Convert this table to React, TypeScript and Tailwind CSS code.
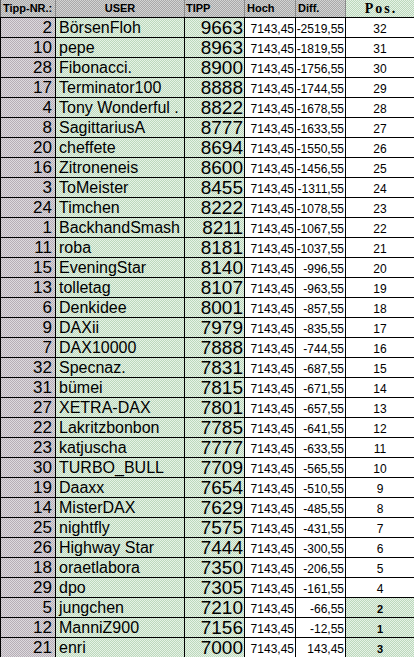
import React from "react";

type Row = [number, string, number, string, number];

const rows: Row[] = [
  [2, "BörsenFloh", 9663, "-2519,55", 32],
  [10, "pepe", 8963, "-1819,55", 31],
  [28, "Fibonacci.", 8900, "-1756,55", 30],
  [17, "Terminator100", 8888, "-1744,55", 29],
  [4, "Tony Wonderful .", 8822, "-1678,55", 28],
  [8, "SagittariusA", 8777, "-1633,55", 27],
  [20, "cheffete", 8694, "-1550,55", 26],
  [16, "Zitroneneis", 8600, "-1456,55", 25],
  [3, "ToMeister", 8455, "-1311,55", 24],
  [24, "Timchen", 8222, "-1078,55", 23],
  [1, "BackhandSmash", 8211, "-1067,55", 22],
  [11, "roba", 8181, "-1037,55", 21],
  [15, "EveningStar", 8140, "-996,55", 20],
  [13, "tolletag", 8107, "-963,55", 19],
  [6, "Denkidee", 8001, "-857,55", 18],
  [9, "DAXii", 7979, "-835,55", 17],
  [7, "DAX10000", 7888, "-744,55", 16],
  [32, "Specnaz.", 7831, "-687,55", 15],
  [31, "bümei", 7815, "-671,55", 14],
  [27, "XETRA-DAX", 7801, "-657,55", 13],
  [22, "Lakritzbonbon", 7785, "-641,55", 12],
  [23, "katjuscha", 7777, "-633,55", 11],
  [30, "TURBO_BULL", 7709, "-565,55", 10],
  [19, "Daaxx", 7654, "-510,55", 9],
  [14, "MisterDAX", 7629, "-485,55", 8],
  [25, "nightfly", 7575, "-431,55", 7],
  [26, "Highway Star", 7444, "-300,55", 6],
  [18, "oraetlabora", 7350, "-206,55", 5],
  [29, "dpo", 7305, "-161,55", 4],
  [5, "jungchen", 7210, "-66,55", 2],
  [12, "ManniZ900", 7156, "-12,55", 1],
  [21, "enri", 7000, "143,45", 3],
];

const greyBg =
  "bg-[repeating-conic-gradient(#a9a9a9_0_25%,#d3d3d3_0_50%)] bg-[length:2px_2px]";
const lavBg =
  "bg-[repeating-conic-gradient(#b6aeb6_0_25%,#ddd9dd_0_50%)] bg-[length:2px_2px]";
const greenBg =
  "bg-[repeating-conic-gradient(#bcd8bc_0_25%,#e6f2e6_0_50%)] bg-[length:2px_2px]";

export default function App() {
  return (
    <div className="w-[414px] h-[657px] overflow-hidden bg-white font-['Liberation_Sans',Arial,sans-serif] text-black">
      {/* header */}
      <div className={`flex h-[18px] border-b border-black ${greyBg}`}>
        <div className="w-[56px] border-l border-[#555] border-r border-r-[#8a8a8a] text-[11px] font-bold leading-[17px] pl-[2px]">
          Tipp-NR.:
        </div>
        <div className="w-[129px] border-r border-[#8a8a8a] text-[11px] font-bold leading-[17px] text-center">
          USER
        </div>
        <div className="w-[60px] border-r border-[#8a8a8a] text-[11px] font-bold leading-[17px] pl-[1px]">
          TIPP
        </div>
        <div className="w-[51px] border-r border-[#8a8a8a] text-[11px] font-bold leading-[17px] pl-[2px]">
          Hoch
        </div>
        <div className="w-[50px] border-r border-[#8a8a8a] text-[11px] font-bold leading-[17px] pl-[2px]">
          Diff.
        </div>
        <div
          className={`w-[68px] text-[14px] font-bold leading-[17px] text-center tracking-[2px] pl-[2px] font-['Liberation_Serif',serif] ${greenBg}`}
        >
          Pos.
        </div>
      </div>
      {rows.map(([nr, user, tipp, diff, pos], i) => {
        const top = pos <= 3;
        return (
          <div key={i} className="flex h-[20px] border-b border-black">
            <div
              className={`w-[56px] border-l border-[#555] border-r border-black text-right text-[17px] leading-[19px] pr-[3px] ${lavBg}`}
            >
              {nr}
            </div>
            <div
              className={`w-[129px] border-r border-black text-[16px] leading-[19px] pl-[3px] whitespace-nowrap overflow-hidden ${greenBg}`}
            >
              {user}
            </div>
            <div
              className={`w-[60px] border-r border-black text-right text-[19px] leading-[19px] pr-[1px] ${greenBg}`}
            >
              {tipp}
            </div>
            <div className="w-[51px] border-r border-black text-right text-[12px] leading-[12px] pt-[5px] pr-[1px]">
              7143,45
            </div>
            <div className="w-[50px] border-r border-black text-right text-[12px] leading-[12px] pt-[5px] pr-[1px]">
              {diff}
            </div>
            {top ? (
              <div
                className={`w-[68px] text-center text-[11px] font-bold leading-[12px] pt-[5px] ${greenBg}`}
              >
                {pos}
              </div>
            ) : (
              <div className="w-[68px] text-center text-[12px] leading-[12px] pt-[5px]">
                {pos}
              </div>
            )}
          </div>
        );
      })}
    </div>
  );
}
